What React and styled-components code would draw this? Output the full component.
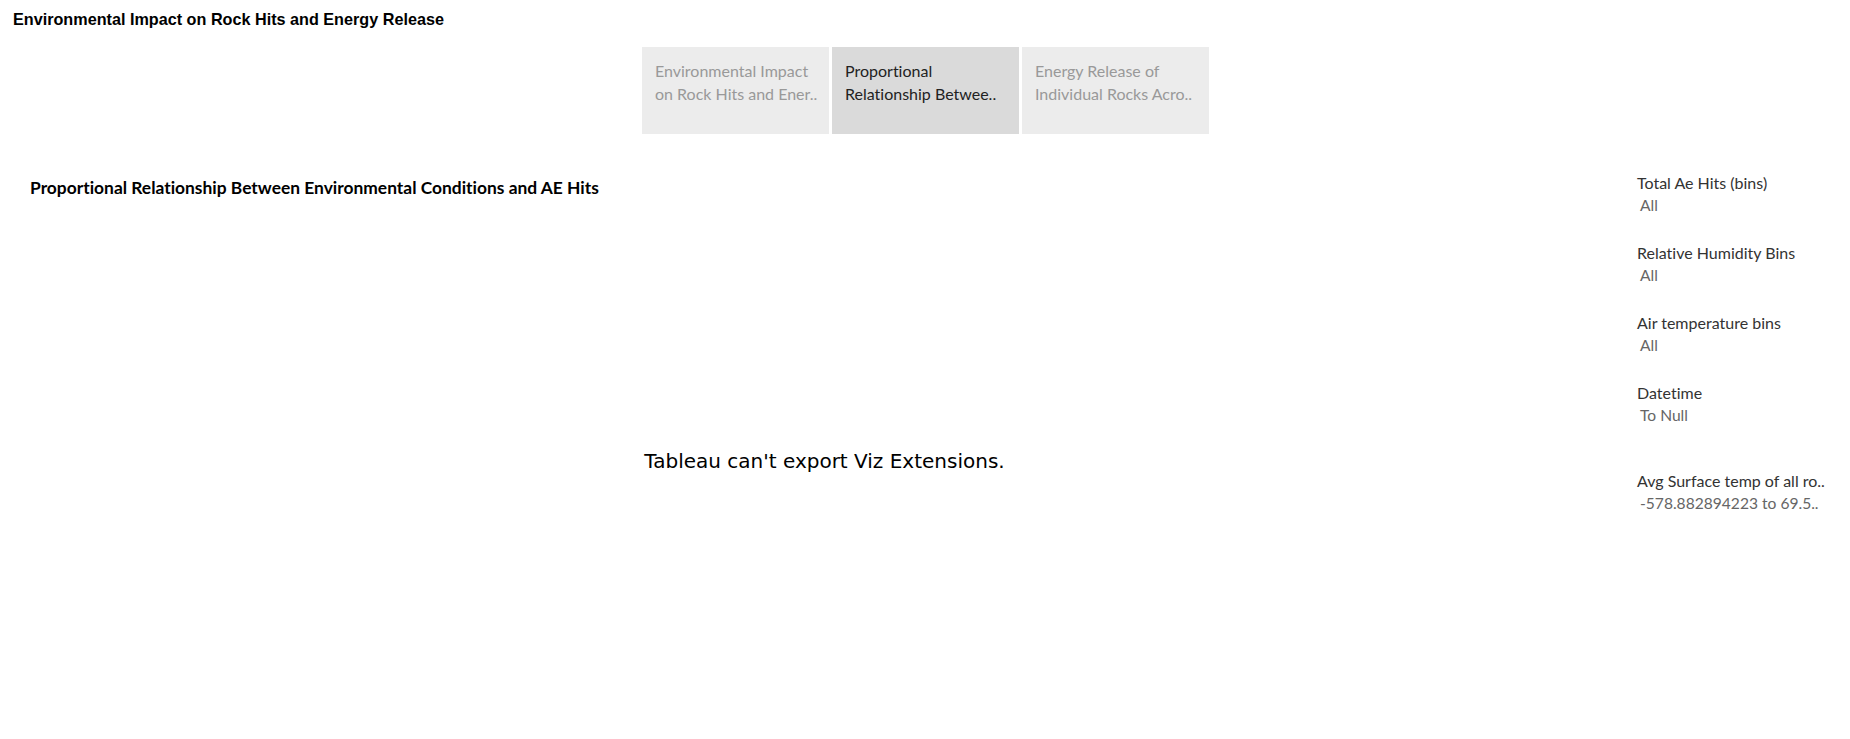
import styled, { createGlobalStyle } from "styled-components";

const GlobalStyle = createGlobalStyle`
  html, body {
    margin: 0;
    padding: 0;
    background: #ffffff;
  }
  #root {
    width: 1850px;
    height: 739px;
  }
`;

const tabs = [
  { lines: ["Environmental Impact", "on Rock Hits and Ener.."], active: false },
  { lines: ["Proportional", "Relationship Betwee.."], active: true },
  { lines: ["Energy Release of", "Individual Rocks Acro.."], active: false },
];

const filters = [
  { title: "Total Ae Hits (bins)", value: "All" },
  { title: "Relative Humidity Bins", value: "All" },
  { title: "Air temperature bins", value: "All" },
  { title: "Datetime", value: "To Null" },
  { title: "Avg Surface temp of all ro..", value: "-578.882894223 to 69.5..", extra: true },
];

function App() {
  return (
    <Page>
      <GlobalStyle />
      <Title>Environmental Impact on Rock Hits and Energy Release</Title>
      <TabBar>
        {tabs.map((tab, id) => (
          <Tab key={id} $active={tab.active}>
            {tab.lines.map((line, i) => (
              <span key={i}>{line}</span>
            ))}
          </Tab>
        ))}
      </TabBar>
      <Body>
        <Main>
          <SheetTitle>
            Proportional Relationship Between Environmental Conditions and AE Hits
          </SheetTitle>
          <Message>Tableau can't export Viz Extensions.</Message>
        </Main>
        <FilterPanel>
          {filters.map((filter, id) => (
            <Filter key={id} $extra={filter.extra}>
              <FilterTitle>{filter.title}</FilterTitle>
              <FilterValue>{filter.value}</FilterValue>
            </Filter>
          ))}
        </FilterPanel>
      </Body>
    </Page>
  );
}

export default App;

const Page = styled.div`
  width: 1850px;
  height: 739px;
  display: flex;
  flex-direction: column;
  background-color: #ffffff;
  overflow: hidden;
  font-variant-ligatures: none;
`;

const Title = styled.h1`
  margin: 0;
  padding: 10px 0 0 13px;
  height: 37px;
  box-sizing: border-box;
  font-family: "Liberation Sans", Arial, sans-serif;
  font-weight: 700;
  font-size: 16.2px;
  color: #000000;
`;

const TabBar = styled.div`
  display: flex;
  gap: 3px;
  margin: 10px 0 0 642px;
`;

const Tab = styled.div`
  width: 187px;
  height: 87px;
  box-sizing: border-box;
  padding: 12px 0 0 13px;
  display: flex;
  flex-direction: column;
  background-color: ${(props) => (props.$active ? "#dadada" : "#ececec")};
  font-family: Lato, "Open Sans", sans-serif;
  font-size: 16px;
  line-height: 23px;
  color: ${(props) => (props.$active ? "#222222" : "#999999")};
  white-space: nowrap;
`;

const Body = styled.div`
  flex: 1;
  display: flex;
`;

const Main = styled.div`
  flex: 1;
  display: flex;
  flex-direction: column;
  padding: 43px 0 0 30px;
`;

const SheetTitle = styled.h2`
  margin: 0;
  font-family: Lato, "Open Sans", sans-serif;
  font-weight: 700;
  font-size: 17.4px;
  color: #000000;
`;

const Message = styled.p`
  margin: 251px 0 0 0;
  padding-right: 18px;
  text-align: center;
  font-family: "DejaVu Sans", sans-serif;
  font-size: 20px;
  color: #000000;
`;

const FilterPanel = styled.div`
  width: 213px;
  display: flex;
  flex-direction: column;
  padding-top: 38px;
`;

const Filter = styled.div`
  display: flex;
  flex-direction: column;
  height: 70px;
  margin-top: ${(props) => (props.$extra ? "18px" : "0")};
`;

const FilterTitle = styled.div`
  font-family: Lato, "Open Sans", sans-serif;
  font-size: 16px;
  line-height: 22px;
  color: #333333;
  white-space: nowrap;
`;

const FilterValue = styled.div`
  padding-left: 3px;
  font-family: Lato, "Open Sans", sans-serif;
  font-size: 15.6px;
  line-height: 22px;
  color: #666666;
  white-space: nowrap;
`;
